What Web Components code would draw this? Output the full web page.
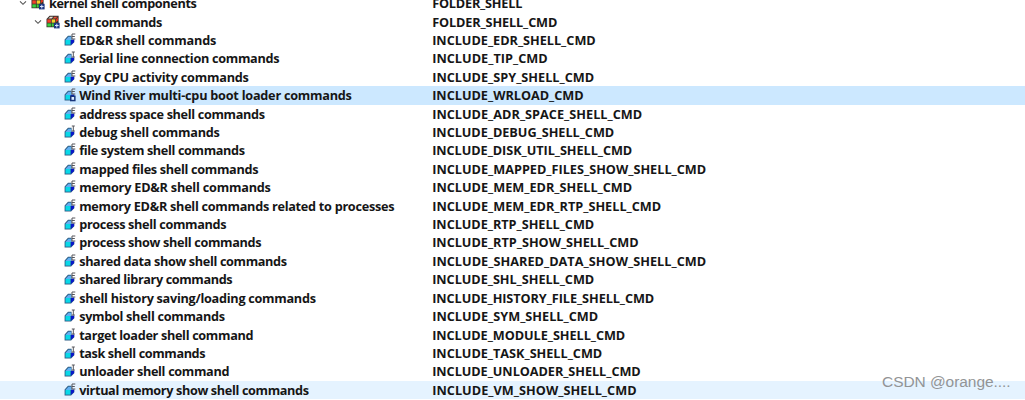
<!DOCTYPE html>
<html lang="en">
<head>
<meta charset="utf-8">
<title>Components</title>
<style>
body {
    margin: 0;
    width: 1025px;
    height: 400px;
    overflow: hidden;
    background: #fff;
}
</style>
</head>
<body>
<component-tree></component-tree>
<script>
function attach(element, html) {
    const template = document.createElement('template');
    template.innerHTML = html;
    element.attachShadow({ mode: 'open' }).appendChild(template.content.cloneNode(true));
}

// Text that is tracked so that it fills the given width
class FitLabel extends HTMLElement {
    connectedCallback() {
        if (this.shadowRoot) return;
        attach(this, `
<style>
:host { display: block; white-space: nowrap; }
</style>
<span><slot></slot></span>`);
        const span = this.shadowRoot.querySelector('span');
        const extra = +this.getAttribute('width') - span.getBoundingClientRect().width;
        span.style.letterSpacing = `${extra / this.textContent.length}px`;
    }
}
customElements.define('fit-label', FitLabel);

const letters = {
    E: '<path d="M11.3 1H8v5h3.3M8 3.5h2.8"/>',
    I: '<path d="M7.8 1h3M9.3 1v5M7.8 6h3"/>'
};

// Blue component block, marked E or I, with an optional badge
class ComponentIcon extends HTMLElement {
    connectedCallback() {
        if (this.shadowRoot) return;
        const badge = this.hasAttribute('badge')
            ? '<path fill="#17357c" d="M6 7.5h5.6v5.8H6z"/><path fill="#dcecff" d="M7.5 9h2.6v2.8H7.5z"/>'
            : '';
        attach(this, `
<style>
:host, svg { display: block; width: 12px; height: 14px; }
</style>
<svg viewBox="0 0 12 14">
<path fill="#2f5f86" d="M.6 12.4V6.6L4 2.8h3.6v4h2.7v2.4l-3.2 3.2z"/>
<path fill="#63b0f2" d="M1.5 7l3-3.3h2.7V7z"/>
<path fill="#08d8e8" d="M1.5 7h5v4.6h-5z"/>
<path fill="#0a18c8" d="M6.9 7.1l3.2-.5v2.5l-3.2 2.7z"/>
<g fill="none" stroke="#56565c" stroke-width="1">${letters[this.getAttribute('kind')]}</g>
${badge}
</svg>`);
    }
}
customElements.define('component-icon', ComponentIcon);

class FolderIcon extends HTMLElement {
    connectedCallback() {
        if (this.shadowRoot) return;
        attach(this, `
<style>
:host, svg { display: block; width: 14px; height: 14px; }
</style>
<svg viewBox="0 0 14 14">
<path fill="#3a302c" d="M.5 12.3V4L3.6.8h9v9.3l-2.5 2.2z"/>
<path fill="#e9e2d6" d="M2.3 3.5l1.9-1.8h3L5.6 3.5z"/>
<path fill="#e8543a" d="M6.6 3.5l1.8-1.8h3L9.6 3.5z"/>
<path fill="#f0402a" d="M1.3 4.4h3.6v3.3H1.3z"/>
<path fill="#f3cf2b" d="M5.7 4.4h3.5v3.3H5.7z"/>
<path fill="#35d23e" d="M1.3 8.4h3.6v3.1H1.3z"/>
<path fill="#35d23e" d="M5.7 8.4h2v3.1h-2z"/>
<path fill="#e8321e" d="M10 4.2l1.9-1.9v3L10 7.2z"/>
<path fill="#1b3580" d="M8 7.8h5.6v5.6H8z"/>
<path fill="#d9e5ff" d="M9 10.1h3.6v1H9zM10.3 8.8h1v3.6h-1z"/>
</svg>`);
    }
}
customElements.define('folder-icon', FolderIcon);

class TreeRow extends HTMLElement {
    connectedCallback() {
        if (this.shadowRoot) return;
        attach(this, `
<style>
:host {
    display: grid;
    grid-template-columns: 432.2px 1fr;
    align-items: center;
    height: 18.42px;
    padding-bottom: 1px;
    box-sizing: border-box;
}
:host([selected]) { background: #cce8ff; }
:host([hovered]) { background: #e5f3ff; }
.name { display: flex; align-items: center; }
:host([level="0"]) .name { padding-left: 19px; }
:host([level="1"]) .name { padding-left: 34px; }
:host([level="2"]) .name { padding-left: 64px; }
.chevron { width: 8px; height: 6px; margin-right: 4px; }
:host([level="2"]) .chevron { display: none; }
::slotted(folder-icon) { margin-right: 4px; }
::slotted(component-icon) { margin-right: 3.2px; }
</style>
<div class="name">
<svg class="chevron" viewBox="0 0 8 6"><path d="M1 1.3l3 3 3-3" fill="none" stroke="#555" stroke-width="1.1"/></svg>
<slot name="icon"></slot>
<slot name="label"></slot>
</div>
<slot name="macro"></slot>`);
    }
}
customElements.define('tree-row', TreeRow);

// level, icon kind, label, label width, macro, macro width, row state
const rows = [
    [0, '', 'kernel shell components', 147.5, 'FOLDER_SHELL', 90],
    [1, '', 'shell commands', 98, 'FOLDER_SHELL_CMD', 125],
    [2, 'E', 'ED&amp;R shell commands', 137, 'INCLUDE_EDR_SHELL_CMD', 163.5],
    [2, 'I', 'Serial line connection commands', 200, 'INCLUDE_TIP_CMD', 115.5],
    [2, 'E', 'Spy CPU activity commands', 169.5, 'INCLUDE_SPY_SHELL_CMD', 162],
    [2, 'E', 'Wind River multi-cpu boot loader commands', 272.5, 'INCLUDE_WRLOAD_CMD', 151.5, 'selected'],
    [2, 'E', 'address space shell commands', 185.5, 'INCLUDE_ADR_SPACE_SHELL_CMD', 210],
    [2, 'I', 'debug shell commands', 140.5, 'INCLUDE_DEBUG_SHELL_CMD', 182],
    [2, 'E', 'file system shell commands', 165.5, 'INCLUDE_DISK_UTIL_SHELL_CMD', 200],
    [2, 'E', 'mapped files shell commands', 179, 'INCLUDE_MAPPED_FILES_SHOW_SHELL_CMD', 274],
    [2, 'E', 'memory ED&amp;R shell commands', 191.5, 'INCLUDE_MEM_EDR_SHELL_CMD', 200],
    [2, 'E', 'memory ED&amp;R shell commands related to processes', 315, 'INCLUDE_MEM_EDR_RTP_SHELL_CMD', 229],
    [2, 'E', 'process shell commands', 147, 'INCLUDE_RTP_SHELL_CMD', 162],
    [2, 'E', 'process show shell commands', 182, 'INCLUDE_RTP_SHOW_SHELL_CMD', 206.5],
    [2, 'E', 'shared data show shell commands', 207.5, 'INCLUDE_SHARED_DATA_SHOW_SHELL_CMD', 274],
    [2, 'E', 'shared library commands', 153, 'INCLUDE_SHL_SHELL_CMD', 162],
    [2, 'E', 'shell history saving/loading commands', 236.5, 'INCLUDE_HISTORY_FILE_SHELL_CMD', 222],
    [2, 'I', 'symbol shell commands', 145.5, 'INCLUDE_SYM_SHELL_CMD', 166],
    [2, 'I', 'target loader shell command', 174, 'INCLUDE_MODULE_SHELL_CMD', 193],
    [2, 'I', 'task shell commands', 126, 'INCLUDE_TASK_SHELL_CMD', 170],
    [2, 'I', 'unloader shell command', 150, 'INCLUDE_UNLOADER_SHELL_CMD', 208.5],
    [2, 'E', 'virtual memory show shell commands', 229.5, 'INCLUDE_VM_SHOW_SHELL_CMD', 204.5, 'hovered']
];

class ComponentTree extends HTMLElement {
    connectedCallback() {
        if (this.shadowRoot) return;
        attach(this, `
<style>
:host {
    display: flow-root;
    position: relative;
    height: 400px;
    overflow: hidden;
    font: 700 12.7px/18px "Open Sans", "Noto Sans", sans-serif;
    color: #161616;
}
.rows { margin-top: -5.8px; }
.watermark {
    position: absolute;
    left: 882px;
    top: 372px;
    font: 15.5px/20px "Liberation Sans", sans-serif;
    color: #929496;
}
</style>
<div class="rows">
${rows.map(([level, kind, label, labelWidth, macro, macroWidth, state = '']) => `
<tree-row level="${level}" ${state}>
${kind
    ? `<component-icon slot="icon" kind="${kind}" ${state === 'selected' ? 'badge' : ''}></component-icon>`
    : '<folder-icon slot="icon"></folder-icon>'}
<fit-label slot="label" width="${labelWidth}">${label}</fit-label>
<fit-label slot="macro" width="${macroWidth}">${macro}</fit-label>
</tree-row>`).join('')}
</div>
<fit-label class="watermark" width="128.5">CSDN @orange....</fit-label>`);
    }
}
customElements.define('component-tree', ComponentTree);
</script>
</body>
</html>
